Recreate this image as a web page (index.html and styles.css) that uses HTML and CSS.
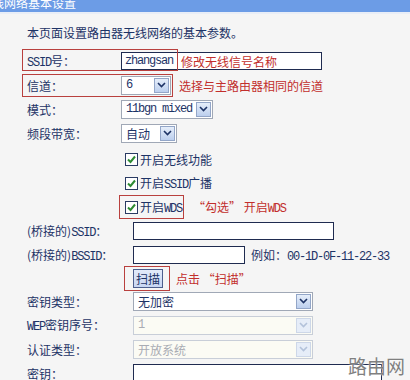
FILE: index.html
```html
<!DOCTYPE html>
<html lang="zh-CN">

<head>
<meta charset="UTF-8">
<meta name="viewport" content="width=device-width, initial-scale=1.0">
<title>无线网络基本设置</title>
<link rel="stylesheet" href="styles.css"></head>

<body>
<div class="title"><span>无线网络基本设置</span></div>

<div class="page">
<p class="intro">本页面设置路由器无线网络的基本参数。</p>

<!-- basic wireless settings -->
<div class="form form-a">
<div class="row">
<label><span class="en">SSID</span>号：</label>
<div class="text w-ssid"><span class="en val">zhangsan</span><span class="note">修改无线信号名称</span></div>
<i class="mark mark-ssid"></i>
</div>
<div class="row">
<label>信道：</label>
<div class="select w-ch"><span class="val en">6</span><span class="btn"><svg width="9" height="6" viewBox="0 0 9 6"><path d="M1 1 L4.5 4.5 L8 1" /></svg></span></div>
<span class="note gap-ch">选择与主路由器相同的信道</span>
<i class="mark mark-ch"></i>
</div>
<div class="row">
<label>模式：</label>
<div class="select w-mode"><span class="val en">11bgn mixed</span><span class="btn"><svg width="9" height="6" viewBox="0 0 9 6"><path d="M1 1 L4.5 4.5 L8 1" /></svg></span></div>
</div>
<div class="row">
<label>频段带宽：</label>
<div class="select w-bw"><span class="val">自动</span><span class="btn"><svg width="9" height="6" viewBox="0 0 9 6"><path d="M1 1 L4.5 4.5 L8 1" /></svg></span></div>
</div>
</div>

<!-- switches -->
<div class="form checks">
<div class="row">
<span class="check"><svg width="13" height="13" viewBox="0 0 13 13"><rect x="0.5" y="0.5" width="12" height="12" /><path d="M3 6.5 L5.5 9 L10 3.5" /></svg><span>开启无线功能</span></span>
</div>
<div class="row">
<span class="check"><svg width="13" height="13" viewBox="0 0 13 13"><rect x="0.5" y="0.5" width="12" height="12" /><path d="M3 6.5 L5.5 9 L10 3.5" /></svg><span>开启<span class="en">SSID</span>广播</span></span>
</div>
<div class="row">
<span class="box box-wds"><span class="check"><svg width="13" height="13" viewBox="0 0 13 13"><rect x="0.5" y="0.5" width="12" height="12" /><path d="M3 6.5 L5.5 9 L10 3.5" /></svg><span>开启<span class="en">WDS</span></span></span></span>
<span class="note gap-wds">“勾选” 开启<span class="en">WDS</span></span>
</div>
</div>

<!-- WDS settings -->
<div class="form form-b">
<div class="row">
<label>(桥接的)<span class="en">SSID</span>：</label>
<div class="text w-bssid"></div>
</div>
<div class="row">
<label>(桥接的)<span class="en">BSSID</span>：</label>
<div class="text w-mac"></div>
<span class="hint">例如：<span class="en">00-1D-0F-11-22-33</span></span>
</div>
<div class="row row-scan">
<label></label>
<span class="box box-scan"><button class="scan">扫描</button></span>
<span class="note gap-scan">点击 “扫描”</span>
</div>
<div class="row">
<label>密钥类型：</label>
<div class="select w-key"><span class="val">无加密</span><span class="btn"><svg width="9" height="6" viewBox="0 0 9 6"><path d="M1 1 L4.5 4.5 L8 1" /></svg></span></div>
</div>
<div class="row">
<label><span class="en">WEP</span>密钥序号：</label>
<div class="select w-key off"><span class="val en">1</span><span class="btn"><svg width="9" height="6" viewBox="0 0 9 6"><path d="M1 1 L4.5 4.5 L8 1" /></svg></span></div>
</div>
<div class="row">
<label>认证类型：</label>
<div class="select w-key off"><span class="val">开放系统</span><span class="btn"><svg width="9" height="6" viewBox="0 0 9 6"><path d="M1 1 L4.5 4.5 L8 1" /></svg></span></div>
</div>
<div class="row">
<label>密钥：</label>
<div class="text w-pass"></div>
</div>
</div>
</div>

<div class="watermark">路由网</div>
</body>

</html>
```

FILE: styles.css
```css
* {
box-sizing: border-box;
}

body {
font-family: 'Noto Sans CJK SC', sans-serif;
font-size: 12px;
color: #1d3366;
margin: 0;
padding: 0;
background-color: #f5f5f5;
overflow: hidden;
height: 380px;
position: relative;
}

.en {
font-family: 'Liberation Mono', monospace;
letter-spacing: -1.2px;
}

/* title bar, cut at the top */
.title {
height: 14px;
overflow: hidden;
background-color: #6c9ce6;
border-bottom: 2px solid #e9eef7;
}

.title span {
display: block;
color: white;
line-height: 12px;
margin-top: -3px;
margin-left: -20px;
white-space: nowrap;
}

.page {
padding: 10px 0 0 27px;
}

.intro {
margin: 0 0 7px 0;
line-height: 18px;
}

.row {
display: flex;
align-items: center;
height: 24px;
position: relative;
white-space: nowrap;
}

.row label {
flex: none;
width: 94px;
}

.form-b .row label {
width: 106px;
}

.checks {
margin-top: 2px;
padding-left: 98px;
}

.row-scan {
height: 22px;
}

/* inputs */
.text {
display: flex;
align-items: center;
height: 18px;
padding-left: 3px;
border: 1px solid #1f2b50;
background-color: white;
}

.text .val {
width: 48px;
}

.w-ssid {
width: 201px;
}

.w-bssid {
width: 201px;
}

.w-mac {
width: 112px;
}

.w-pass {
width: 249px;
}

.select {
display: flex;
align-items: center;
height: 19px;
padding-left: 4px;
border: 1px solid #a0a8b6;
background-color: white;
}

.select .val {
flex: 1;
}

.select .btn {
display: flex;
align-items: center;
justify-content: center;
width: 15px;
height: 15px;
margin-right: 1px;
border: 1px solid #93a6c8;
background: linear-gradient(#e6eefa, #bccfee);
}

.select .btn path {
fill: none;
stroke: #1d3366;
stroke-width: 1.6;
}

.select.off {
border-color: #c8ced8;
background-color: #fbfbf4;
color: #a9acb3;
}

.select.off .btn {
border-color: #cdd7e8;
background: #e6edf8;
}

.select.off .btn path {
stroke: #b3c2da;
}

.w-ch {
width: 50px;
}

.w-mode {
width: 92px;
}

.w-bw {
width: 56px;
}

.w-key {
width: 180px;
}

.check {
display: flex;
align-items: center;
gap: 2px;
}

.check rect {
fill: white;
stroke: #2a3b63;
}

.check path {
fill: none;
stroke: #2e8b33;
stroke-width: 2;
}

.scan {
height: 19px;
width: 30px;
padding: 0;
font: inherit;
color: #1d3366;
border: 1px solid #4d5f8d;
background: linear-gradient(#e3ebfa, #c8d6f2);
}

/* red annotations */
.note {
color: #c22e2c;
}

.text .note {
margin-left: 8px;
}

.gap-ch {
margin-left: 8px;
}

.gap-wds {
margin-left: 9px;
}

.gap-scan {
margin-left: 6px;
}

.hint {
margin-left: 6px;
}

.box {
display: flex;
align-items: center;
border: 1px solid #b9403e;
}

.box-wds {
height: 24px;
margin-left: -6px;
padding: 0 1px 0 5px;
}

.box-scan {
margin-left: -9px;
padding: 2px 6px 2px 8px;
}

.mark {
position: absolute;
border: 1px solid #b9403e;
}

.mark-ssid {
left: -5px;
top: 0;
width: 156px;
height: 22px;
}

.mark-ch {
left: -5px;
top: 1px;
width: 151px;
height: 23px;
}

.watermark {
position: absolute;
left: 348px;
top: 354px;
font-size: 19px;
line-height: 24px;
color: #808080;
text-shadow: 0 0 2px white;
}
```
